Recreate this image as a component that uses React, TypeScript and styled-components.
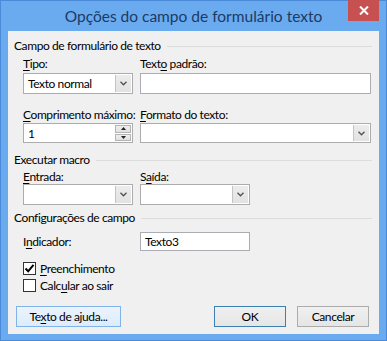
import React from 'react';
import styled, { createGlobalStyle } from 'styled-components';

const Global = createGlobalStyle`
  html, body { margin: 0; padding: 0; background: #fff; }
  body { font-family: Lato, "Open Sans", sans-serif; font-size: 12px; letter-spacing: -0.4px; color: #000; }
  * { box-sizing: border-box; }
`;

const Window = styled.div`
  width: 387px;
  height: 341px;
  background: #6aabef;
  border: 1px solid #4a8ad8;
  display: flex;
  flex-direction: column;
  padding: 0 7px 6px 7px;
`;

const TitleBar = styled.div`
  position: relative;
  height: 30px;
  display: flex;
  align-items: center;
  justify-content: center;
`;

const Title = styled.div`
  font-size: 15.5px;
  letter-spacing: 0;
  color: #1b3a66;
`;

const CloseButton = styled.div`
  position: absolute;
  top: -1px;
  right: 0;
  width: 31px;
  height: 21px;
  background: #c75050;
  display: flex;
  align-items: center;
  justify-content: center;
`;

const Client = styled.div`
  flex: 1;
  background: #f0f0f0;
  display: flex;
  flex-direction: column;
  padding-top: 7px;
`;

const GroupHeader = styled.div<{ $mt?: number }>`
  display: flex;
  align-items: center;
  gap: 6px;
  height: 16px;
  line-height: 16px;
  padding-left: 6px;
  padding-right: 7px;
  margin-top: ${p => p.$mt ?? 0}px;
  white-space: nowrap;
  &::after {
    content: "";
    flex: 1;
    height: 1px;
    background: #dcdcdc;
  }
`;

const FieldRow = styled.div<{ $mt: number; $second: number }>`
  display: grid;
  grid-template-columns: 110px ${p => p.$second}px;
  column-gap: 7px;
  padding-left: 15px;
  margin-top: ${p => p.$mt}px;
`;

const Field = styled.div<{ $gap: number }>`
  display: flex;
  flex-direction: column;
  gap: ${p => p.$gap}px;
`;

const Label = styled.label<{ $h?: number }>`
  display: block;
  height: ${p => p.$h ?? 16}px;
  line-height: ${p => p.$h ?? 16}px;
  white-space: nowrap;
`;

const Key = styled.span`
  text-decoration: underline;
  text-underline-offset: 2px;
`;

const TextBox = styled.div<{ $h: number }>`
  height: ${p => p.$h}px;
  background: #fff;
  border: 1px solid #abadb3;
  padding: 0 4px;
  display: flex;
  align-items: center;
  white-space: nowrap;
`;

const Combo = styled.div<{ $h: number }>`
  height: ${p => p.$h}px;
  background: #fff;
  border: 1px solid #acacac;
  display: flex;
  align-items: stretch;
`;

const ComboText = styled.div`
  flex: 1;
  padding-left: 4px;
  display: flex;
  align-items: center;
  white-space: nowrap;
  overflow: hidden;
`;

const DropButton = styled.div`
  width: 16px;
  border-left: 1px solid #c4c4c4;
  background: linear-gradient(#ececec, #e2e2e2);
  display: flex;
  align-items: center;
  justify-content: center;
  margin: 1px 1px 1px 0;
`;

const Spinner = styled.div`
  width: 16px;
  display: flex;
  flex-direction: column;
  gap: 1px;
  margin: 1px 1px 1px 0;
`;

const SpinHalf = styled.div`
  flex: 1;
  background: linear-gradient(#eeeeee, #e0e0e0);
  border: 1px solid #b4b4b4;
  display: flex;
  align-items: center;
  justify-content: center;
`;

const InlineRow = styled.div<{ $mt: number }>`
  display: grid;
  grid-template-columns: 110px 110px;
  column-gap: 7px;
  align-items: center;
  padding-left: 15px;
  margin-top: ${p => p.$mt}px;
`;

const CheckRow = styled.div<{ $mt?: number }>`
  display: flex;
  align-items: center;
  gap: 4px;
  height: 17px;
  padding-left: 15px;
  margin-top: ${p => p.$mt ?? 0}px;
  white-space: nowrap;
`;

const CheckBox = styled.div`
  width: 13px;
  height: 13px;
  border: 1px solid #333;
  background: #fff;
  display: flex;
  align-items: center;
  justify-content: center;
`;

const ButtonRow = styled.div`
  display: flex;
  align-items: center;
  padding-left: 8px;
  padding-right: 10px;
  margin-top: 12px;
`;

const Button = styled.div<{ $variant?: 'hover' | 'default'; $w: number }>`
  width: ${p => p.$w}px;
  height: 21px;
  display: flex;
  align-items: center;
  justify-content: center;
  white-space: nowrap;
  border: 1px solid
    ${p => (p.$variant === 'hover' ? '#7eb4ea' : p.$variant === 'default' ? '#3c7fb1' : '#acacac')};
  background: ${p =>
    p.$variant === 'hover' ? 'linear-gradient(#ecf4fc, #dcecfc)' : 'linear-gradient(#f0f0f0, #e5e5e5)'};
`;

const Spacer = styled.div<{ $w?: number }>`
  flex: ${p => (p.$w ? `0 0 ${p.$w}px` : '1')};
`;

const Chevron = () => (
  <svg width="7" height="5" viewBox="0 0 7 5">
    <path d="M0.5 0.8 L3.5 3.8 L6.5 0.8" fill="none" stroke="#555" strokeWidth="1.4" />
  </svg>
);

const Tri = ({ up }: { up?: boolean }) => (
  <svg width="5" height="3" viewBox="0 0 5 3">
    <path d={up ? 'M0 3 L2.5 0 L5 3 Z' : 'M0 0 L2.5 3 L5 0 Z'} fill="#222" />
  </svg>
);

const CloseX = () => (
  <svg width="10" height="9" viewBox="0 0 10 9">
    <path d="M1 0.5 L9 8.5 M9 0.5 L1 8.5" stroke="#fff" strokeWidth="2" />
  </svg>
);

const Check = () => (
  <svg width="11" height="11" viewBox="0 0 11 11">
    <path d="M1.5 5.5 L4.2 8.3 L9.5 1.8" fill="none" stroke="#000" strokeWidth="2" />
  </svg>
);

export default function App() {
  return (
    <>
      <Global />
      <Window>
        <TitleBar>
          <Title>Opções do campo de formulário texto</Title>
          <CloseButton>
            <CloseX />
          </CloseButton>
        </TitleBar>
        <Client>
          <GroupHeader>Campo de formulário de texto</GroupHeader>
          <FieldRow $mt={2} $second={231}>
            <Field $gap={1}>
              <Label>
                <Key>T</Key>ipo:
              </Label>
              <Combo $h={21}>
                <ComboText>Texto normal</ComboText>
                <DropButton>
                  <Chevron />
                </DropButton>
              </Combo>
            </Field>
            <Field $gap={1}>
              <Label>
                Text<Key>o</Key> padrão:
              </Label>
              <TextBox $h={21} />
            </Field>
          </FieldRow>
          <FieldRow $mt={13} $second={231}>
            <Field $gap={0}>
              <Label>
                <Key>C</Key>omprimento máximo:
              </Label>
              <Combo $h={20}>
                <ComboText>1</ComboText>
                <Spinner>
                  <SpinHalf>
                    <Tri up />
                  </SpinHalf>
                  <SpinHalf>
                    <Tri />
                  </SpinHalf>
                </Spinner>
              </Combo>
            </Field>
            <Field $gap={0}>
              <Label>
                <Key>F</Key>ormato do texto:
              </Label>
              <Combo $h={20}>
                <ComboText />
                <DropButton>
                  <Chevron />
                </DropButton>
              </Combo>
            </Field>
          </FieldRow>
          <GroupHeader $mt={9}>Executar macro</GroupHeader>
          <FieldRow $mt={1} $second={110}>
            <Field $gap={0}>
              <Label $h={15}>
                <Key>E</Key>ntrada:
              </Label>
              <Combo $h={21}>
                <ComboText />
                <DropButton>
                  <Chevron />
                </DropButton>
              </Combo>
            </Field>
            <Field $gap={0}>
              <Label $h={15}>
                S<Key>a</Key>ída:
              </Label>
              <Combo $h={21}>
                <ComboText />
                <DropButton>
                  <Chevron />
                </DropButton>
              </Combo>
            </Field>
          </FieldRow>
          <GroupHeader $mt={5}>Configurações de campo</GroupHeader>
          <InlineRow $mt={6}>
            <Label>
              I<Key>n</Key>dicador:
            </Label>
            <TextBox $h={19}>Texto3</TextBox>
          </InlineRow>
          <CheckRow $mt={9}>
            <CheckBox>
              <Check />
            </CheckBox>
            <span>
              <Key>P</Key>reenchimento
            </span>
          </CheckRow>
          <CheckRow>
            <CheckBox />
            <span>
              Calc<Key>u</Key>lar ao sair
            </span>
          </CheckRow>
          <ButtonRow>
            <Button $w={105} $variant="hover">
              <span>
                Te<Key>x</Key>to de ajuda...
              </span>
            </Button>
            <Spacer />
            <Button $w={72} $variant="default">
              OK
            </Button>
            <Spacer $w={11} />
            <Button $w={72}>Cancelar</Button>
          </ButtonRow>
        </Client>
      </Window>
    </>
  );
}
